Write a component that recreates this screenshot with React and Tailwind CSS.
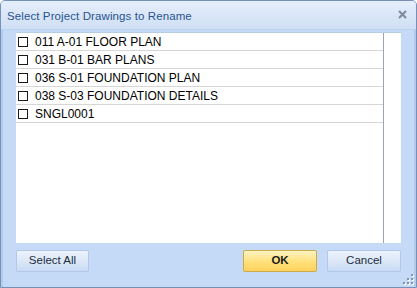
import React from "react";

const rows = [
  "011 A-01 FLOOR PLAN",
  "031 B-01 BAR PLANS",
  "036 S-01 FOUNDATION PLAN",
  "038 S-03 FOUNDATION DETAILS",
  "SNGL0001",
];

function Grip() {
  const dots = [
    [8, 0],
    [4, 4],
    [8, 4],
    [0, 8],
    [4, 8],
    [8, 8],
  ];
  return (
    <svg width="11" height="11" viewBox="0 0 11 11" className="absolute right-[2px] bottom-[2px]">
      {dots.map(([x, y], i) => (
        <g key={i}>
          <rect x={x + 1} y={y + 1} width="2" height="2" fill="#ffffff" />
          <rect x={x} y={y} width="2" height="2" fill="#7f93ad" />
        </g>
      ))}
    </svg>
  );
}

export default function App() {
  return (
    <div className="w-[417px] h-[288px] bg-white">
      <div className="relative w-[417px] h-[288px] border border-[#7591b8] rounded-t-[5px] bg-[#c4daf6] flex flex-col font-['Liberation_Sans',Arial,sans-serif] overflow-hidden">
        <div className="h-[29px] shrink-0 flex items-center justify-between pl-[6px] pr-[9px] bg-gradient-to-b from-[#e5eefb] to-[#cfdff4] border-b border-[#bcd2ef]">
          <span className="mt-[3px] text-[11.5px] text-[#2a5490] tracking-[0.1px]">Select Project Drawings to Rename</span>
          <svg width="9" height="9" viewBox="0 0 9 9" className="mt-[-2px]">
            <path d="M1 1 L8 8 M8 1 L1 8" stroke="#7d8a9c" strokeWidth="2" />
          </svg>
        </div>
        <div className="flex-1 flex flex-col px-[13px] pt-[2px] pb-[14px] border-x-[2px] border-[#b4ccec]">
          <div className="h-[211px] bg-white border-t border-[#b8cce6] flex">
            <div className="w-[368px] border-r border-[#9aa6b3] flex flex-col">
              {rows.map((r) => (
                <div key={r} className="h-[18px] border-b border-[#d6d6d6] flex items-center pl-[2px]">
                  <div className="w-[10px] h-[10px] border border-[#1a1a1a] bg-white" />
                  <span className="ml-[7px] text-[12px] text-black leading-none">{r}</span>
                </div>
              ))}
            </div>
            <div className="flex-1" />
          </div>
          <div className="mt-[7px] flex items-center">
            <button className="w-[73px] h-[22px] rounded-[2px] border border-[#b1c8e6] bg-gradient-to-b from-[#edf3fc] via-[#dce8f8] to-[#c8daf3] text-[11.5px] text-[#1b2b40]">
              Select All
            </button>
            <div className="flex-1" />
            <button className="w-[74px] h-[22px] rounded-[2px] border border-[#c9a94f] bg-gradient-to-b from-[#fff4c0] via-[#ffe27f] to-[#ffd35a] text-[11.5px] font-bold text-[#1a1a1a]">
              OK
            </button>
            <button className="ml-[10px] w-[74px] h-[22px] rounded-[2px] border border-[#b1c8e6] bg-gradient-to-b from-[#edf3fc] via-[#dce8f8] to-[#c8daf3] text-[11.5px] text-[#1b2b40]">
              Cancel
            </button>
          </div>
        </div>
        <Grip />
      </div>
    </div>
  );
}
